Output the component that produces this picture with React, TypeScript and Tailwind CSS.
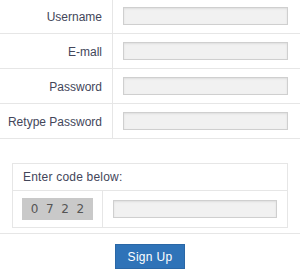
import React from "react";

const fields = ["Username", "E-mall", "Password", "Retype Password"];

function Field({ label }: { label: string }) {
  return (
    <div className="flex h-[35px] border-b border-[#e6e6e6]">
      <div className="w-[113px] shrink-0 flex items-center justify-end pr-[10px] pt-px border-r border-[#e6e6e6] text-[12px] text-[#43465a]">
        {label}
      </div>
      <div className="flex-1 flex items-center pl-[10px] pr-[12px]">
        <input
          type="text"
          className="w-full h-[18px] border border-[#cfcfcf] bg-[#f1f1f1] shadow-[inset_0_1px_2px_rgba(0,0,0,0.08)] outline-none"
        />
      </div>
    </div>
  );
}

export default function App() {
  return (
    <main
      className="w-[300px] h-[275px] bg-white overflow-hidden"
      style={{ fontFamily: '"Liberation Sans", Arial, sans-serif' }}
    >
      {/* Account fields */}
      <div className="-mt-px">
        {fields.map((f) => (
          <Field key={f} label={f} />
        ))}
      </div>

      {/* Captcha */}
      <div className="pt-[24px] pb-[5px] border-b border-[#e6e6e6]">
        <div className="mx-[12px] border border-[#e6e6e6]">
          <div className="h-[27px] flex items-center pl-[10px] border-b border-[#e6e6e6] text-[12px] text-[#43465a] tracking-[0.2px]">
            Enter code below:
          </div>
          <div className="flex h-[36px]">
            <div className="w-[90px] shrink-0 flex items-center pl-[9px] border-r border-[#e6e6e6]">
              <div
                className="w-[71px] h-[22px] bg-[#c9c9c9] flex items-center justify-around px-[5px] text-[12px] text-[#555]"
                style={{ fontFamily: '"DejaVu Sans", sans-serif' }}
              >
                <span>0</span>
                <span>7</span>
                <span>2</span>
                <span>2</span>
              </div>
            </div>
            <div className="flex-1 flex items-center pl-[10px] pr-[10px]">
              <input
                type="text"
                className="w-full h-[18px] border border-[#cfcfcf] bg-[#f1f1f1] shadow-[inset_0_1px_2px_rgba(0,0,0,0.08)] outline-none"
              />
            </div>
          </div>
        </div>
      </div>

      {/* Submit */}
      <div className="flex justify-center pt-[10px]">
        <button className="w-[70px] h-[25px] bg-[#2f73b8] border border-[#2a67a6] text-white text-[12px] tracking-[0.3px]">
          Sign Up
        </button>
      </div>
    </main>
  );
}
